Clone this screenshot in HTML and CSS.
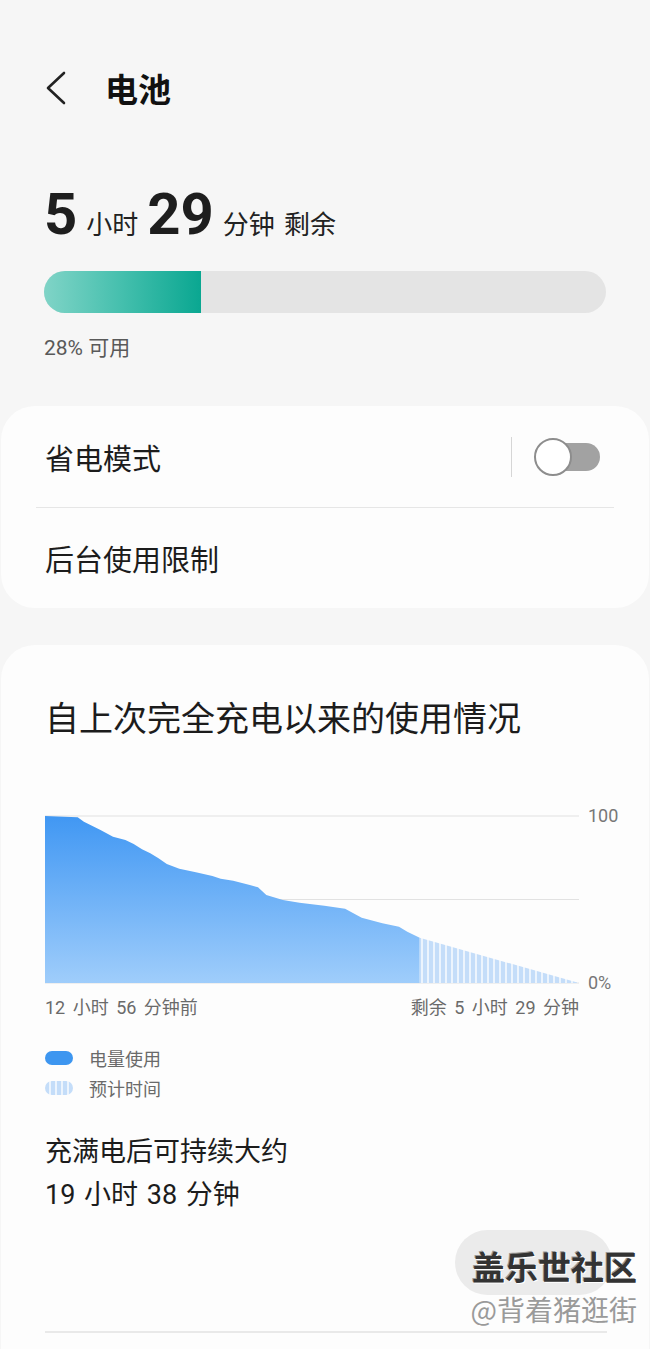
FILE: index.html
```html
<!DOCTYPE html>
<html lang="zh-CN">
<head>
<meta charset="utf-8">
<title>电池</title>
<link rel="stylesheet" href="styles.css">
</head>
<body>
<div class="page">
  <header class="header">
    <svg class="back" width="22" height="34" viewBox="0 0 22 34"><polyline points="19,2 3,17 19,32" fill="none" stroke="#222" stroke-width="2.6" stroke-linecap="round" stroke-linejoin="round"/></svg>
    <h1 class="title">电池</h1>
  </header>

  <section class="summary">
    <div class="remain">
      <span class="num">5</span><span class="unit">小时</span><span class="num">29</span><span class="unit">分钟</span><span class="unit">剩余</span>
    </div>
    <div class="bar"><div class="bar-fill" style="width:28%"></div></div>
    <div class="avail">28% 可用</div>
  </section>

  <section class="card card-settings">
    <div class="row">
      <span>省电模式</span>
      <div class="switch-area">
        <span class="vdiv"></span>
        <span class="switch"><span class="track"></span><span class="knob"></span></span>
      </div>
    </div>
    <div class="sep"></div>
    <div class="row row-last"><span>后台使用限制</span></div>
  </section>

  <section class="card card-usage">
    <h2 class="usage-title">自上次完全充电以来的使用情况</h2>
    <div class="chart">
      <svg class="plot" width="534" height="170" viewBox="0 0 534 170">
        <defs>
          <linearGradient id="areaGrad" x1="0" y1="0" x2="0" y2="168" gradientUnits="userSpaceOnUse">
            <stop offset="0" stop-color="#4097f3"/>
            <stop offset="1" stop-color="#9fcdfb"/>
          </linearGradient>
          <pattern id="stripes" width="6" height="10" patternUnits="userSpaceOnUse">
            <rect width="6" height="10" fill="#ecf4fd"/>
            <rect width="4" height="10" fill="#c4ddf9"/>
          </pattern>
        </defs>
        <line x1="0" y1="1" x2="534" y2="1" stroke="#e2e2e2" stroke-width="1.2"/>
        <line x1="0" y1="84.5" x2="534" y2="84.5" stroke="#e2e2e2" stroke-width="1.2"/>
        <line x1="0" y1="168" x2="534" y2="168" stroke="#e2e2e2" stroke-width="1.2"/>
        <path fill="url(#areaGrad)" d="M0,168 L0,1 L32.7,2.3 L38.9,6.7 L55.5,15 L68,21.7 L80.4,25 L88.7,29 L97,34.3 L105.3,38.3 L113.5,43.3 L121.8,49 L134.3,53.7 L150.9,57.3 L167.4,61 L175.7,63.7 L188.2,65.7 L204.8,70 L213,72.3 L221.3,80 L237.9,85 L254.5,87.7 L279.4,90.7 L300.1,93.7 L316.7,102.7 L337.4,108.3 L354,111.7 L362.3,116.7 L374.7,122.7 L374.7,168 Z"/>
        <path fill="url(#stripes)" d="M374.7,122.7 L534,168 L374.7,168 Z"/>
      </svg>
      <div class="axis"><span class="axis-top">100</span><span class="axis-bottom">0%</span></div>
    </div>
    <div class="xlabels"><span>12 小时 56 分钟前</span><span>剩余 5 小时 29 分钟</span></div>
    <div class="legend">
      <div class="legend-item"><span class="pill pill-used"></span><span>电量使用</span></div>
      <div class="legend-item"><span class="pill pill-est"></span><span>预计时间</span></div>
    </div>
    <div class="full">
      <div>充满电后可持续大约</div>
      <div>19 小时 38 分钟</div>
    </div>
    <div class="actions"><span class="btn"></span></div>
    <div class="bottom-sep"></div>
  </section>

  <div class="watermark">
    <div class="wm1">盖乐世社区</div>
    <div class="wm2">@背着猪逛街</div>
  </div>
</div>
</body>
</html>
```

FILE: styles.css
```css
html, body {
  margin: 0;
  padding: 0;
}
body {
  background: #f6f6f6;
  font-family: Roboto, "Noto Sans CJK SC", sans-serif;
  color: #1c1c1c;
}
.page {
  position: relative;
  width: 650px;
  height: 1349px;
  overflow: hidden;
}

/* header */
.header {
  display: flex;
  align-items: center;
  height: 64px;
  margin-top: 56px;
  padding-left: 45px;
}
.back {
  display: block;
  flex-shrink: 0;
}
.title {
  margin: 0 0 0 38px;
  font-family: "Noto Sans CJK SC", sans-serif;
  font-size: 33px;
  font-weight: 700;
  line-height: 40px;
  color: #111;
}

/* summary */
.summary {
  padding: 0 44px;
}
.remain {
  display: flex;
  align-items: baseline;
  gap: 9px;
  margin-top: 65px;
  height: 58px;
}
.num {
  font-family: Roboto, sans-serif;
  font-size: 58px;
  font-weight: 700;
  line-height: 58px;
  color: #1e1e1e;
}
.unit {
  font-family: "Noto Sans CJK SC", sans-serif;
  font-size: 26px;
  line-height: 30px;
  color: #222;
}
.bar {
  margin-top: 28px;
  height: 42px;
  border-radius: 21px;
  background: #e4e4e4;
  overflow: hidden;
}
.bar-fill {
  height: 100%;
  background: linear-gradient(90deg, #80d4c7 0%, #44bfad 50%, #0aa791 100%);
}
.avail {
  margin-top: 22px;
  font-size: 21px;
  line-height: 26px;
  color: #595959;
}

/* cards */
.card {
  margin: 0 1px;
  background: #fdfdfd;
  border-radius: 34px;
}
.card-settings {
  margin-top: 45px;
}
.row {
  display: flex;
  align-items: center;
  justify-content: space-between;
  height: 101px;
  padding: 0 49px 0 44px;
  font-family: "Noto Sans CJK SC", sans-serif;
  font-size: 29px;
  color: #1c1c1c;
}
.row-last {
  height: 100px;
}
.sep {
  height: 1px;
  margin: 0 35px;
  background: #e6e6e6;
}
.switch-area {
  display: flex;
  align-items: center;
  gap: 22px;
}
.vdiv {
  width: 1px;
  height: 40px;
  background: #d6d6d6;
}
.switch {
  position: relative;
  width: 66px;
  height: 38px;
}
.track {
  position: absolute;
  right: 0;
  top: 5px;
  width: 60px;
  height: 28px;
  border-radius: 14px;
  background: #a2a2a2;
}
.knob {
  position: absolute;
  left: 0;
  top: 0;
  width: 38px;
  height: 38px;
  box-sizing: border-box;
  border-radius: 50%;
  background: #fff;
  border: 2px solid #8d8d8d;
}

.card-usage {
  margin-top: 37px;
  padding: 52px 37px 60px 44px;
}
.usage-title {
  margin: 0;
  font-family: "Noto Sans CJK SC", sans-serif;
  font-size: 34px;
  font-weight: 400;
  line-height: 40px;
  color: #1c1c1c;
}
.chart {
  display: flex;
  margin-top: 78px;
}
.plot {
  display: block;
  flex-shrink: 0;
}
.axis {
  display: flex;
  flex-direction: column;
  justify-content: space-between;
  flex-shrink: 0;
  height: 167px;
  margin-top: 1px;
  margin-left: 9px;
  font-size: 18px;
  color: #777;
}
.axis span {
  line-height: 20px;
}
.axis-top {
  margin-top: -10px;
}
.axis-bottom {
  margin-bottom: -10px;
}
.xlabels {
  display: flex;
  justify-content: space-between;
  width: 534px;
  margin-top: 12px;
  font-size: 18px;
  line-height: 22px;
  word-spacing: 3px;
  color: #6a6a6a;
}
.legend {
  margin-top: 24px;
}
.legend-item {
  display: flex;
  align-items: center;
  gap: 16px;
  height: 30px;
  font-size: 18px;
  color: #6a6a6a;
}
.pill {
  width: 28px;
  height: 14px;
  border-radius: 7px;
}
.pill-used {
  background: #3d96f0;
}
.pill-est {
  background: repeating-linear-gradient(90deg, #c4ddf9 0 4px, #ecf4fd 4px 6px);
}
.full {
  margin-top: 28px;
  font-size: 27px;
  line-height: 43px;
  word-spacing: 2px;
  color: #1c1c1c;
}
.actions {
  display: flex;
  justify-content: flex-end;
  margin-top: 13px;
}
.btn {
  display: block;
  width: 157px;
  height: 65px;
  border-radius: 33px;
  background: #ebebeb;
}
.bottom-sep {
  width: 562px;
  height: 2px;
  margin-top: 36px;
  background: #e9e9e9;
}

/* watermark overlay */
.watermark {
  position: absolute;
  right: 13px;
  top: 1243px;
  text-align: right;
  font-family: "Noto Sans CJK SC", sans-serif;
}
.wm1 {
  font-size: 33px;
  font-weight: 700;
  line-height: 46px;
  color: #333;
  text-shadow: 1px 1px 0 #fff, -1px -1px 0 #999;
}
.wm2 {
  font-size: 28px;
  line-height: 40px;
  color: #9a9a9a;
}
```
